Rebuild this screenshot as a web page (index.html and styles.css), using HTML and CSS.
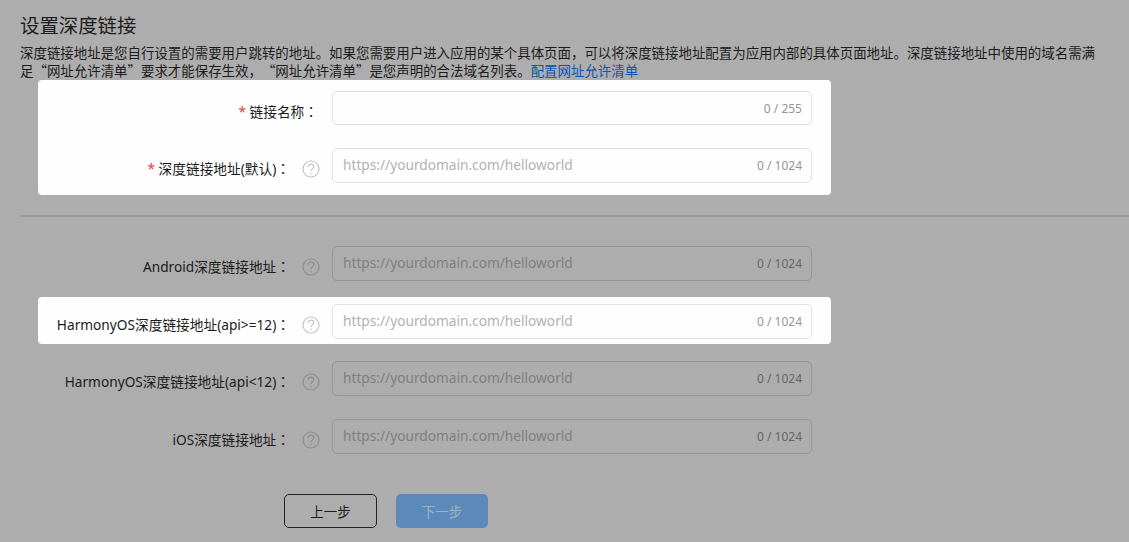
FILE: index.html
```html
<!DOCTYPE html>
<html lang="zh-CN">
<head>
    <meta charset="UTF-8">
    <meta name="viewport" content="width=device-width, initial-scale=1.0">
    <title>设置深度链接</title>
    <link rel="stylesheet" href="styles.css">
</head>
<body>
    <div class="page">
        <h1>设置深度链接</h1>
        <p class="desc">深度链接地址是您自行设置的需要用户跳转的地址。如果您需要用户进入应用的某个具体页面，可以将深度链接地址配置为应用内部的具体页面地址。深度链接地址中使用的域名需满足“网址允许清单”要求才能保存生效，“网址允许清单”是您声明的合法域名列表。<a href="#">配置网址允许清单</a></p>

        <form>
            <div class="group lit first">
                <div class="row short">
                    <label class="label no-help"><span class="req">*</span> 链接名称<span class="colon" lang="zh-TW">：</span></label>
                    <div class="field">
                        <input type="text">
                        <span class="count">0 / 255</span>
                    </div>
                </div>
                <div class="row">
                    <label class="label"><span class="req">*</span> 深度链接地址(默认)<span class="colon" lang="zh-TW">：</span></label>
                    <svg class="help" viewBox="0 0 18 18"><circle cx="9" cy="9" r="8"/><path d="M6.2 7c0-1.7 1.2-2.9 2.8-2.9s2.8 1.1 2.8 2.6c0 2.1-2.8 2.2-2.8 4.4"/><path d="M9 12.8v1.5"/></svg>
                    <div class="field">
                        <input type="text" placeholder="https://yourdomain.com/helloworld">
                        <span class="count">0 / 1024</span>
                    </div>
                </div>
            </div>

            <hr class="divider">

            <div class="group android">
                <div class="row">
                    <label class="label">Android深度链接地址<span class="colon" lang="zh-TW">：</span></label>
                    <svg class="help" viewBox="0 0 18 18"><circle cx="9" cy="9" r="8"/><path d="M6.2 7c0-1.7 1.2-2.9 2.8-2.9s2.8 1.1 2.8 2.6c0 2.1-2.8 2.2-2.8 4.4"/><path d="M9 12.8v1.5"/></svg>
                    <div class="field">
                        <input type="text" placeholder="https://yourdomain.com/helloworld">
                        <span class="count">0 / 1024</span>
                    </div>
                </div>
            </div>

            <div class="group lit second">
                <div class="row">
                    <label class="label">HarmonyOS深度链接地址(api&gt;=12)<span class="colon" lang="zh-TW">：</span></label>
                    <svg class="help" viewBox="0 0 18 18"><circle cx="9" cy="9" r="8"/><path d="M6.2 7c0-1.7 1.2-2.9 2.8-2.9s2.8 1.1 2.8 2.6c0 2.1-2.8 2.2-2.8 4.4"/><path d="M9 12.8v1.5"/></svg>
                    <div class="field">
                        <input type="text" placeholder="https://yourdomain.com/helloworld">
                        <span class="count">0 / 1024</span>
                    </div>
                </div>
            </div>

            <div class="group rest">
                <div class="row">
                    <label class="label">HarmonyOS深度链接地址(api&lt;12)<span class="colon" lang="zh-TW">：</span></label>
                    <svg class="help" viewBox="0 0 18 18"><circle cx="9" cy="9" r="8"/><path d="M6.2 7c0-1.7 1.2-2.9 2.8-2.9s2.8 1.1 2.8 2.6c0 2.1-2.8 2.2-2.8 4.4"/><path d="M9 12.8v1.5"/></svg>
                    <div class="field">
                        <input type="text" placeholder="https://yourdomain.com/helloworld">
                        <span class="count">0 / 1024</span>
                    </div>
                </div>
                <div class="row">
                    <label class="label">iOS深度链接地址<span class="colon" lang="zh-TW">：</span></label>
                    <svg class="help" viewBox="0 0 18 18"><circle cx="9" cy="9" r="8"/><path d="M6.2 7c0-1.7 1.2-2.9 2.8-2.9s2.8 1.1 2.8 2.6c0 2.1-2.8 2.2-2.8 4.4"/><path d="M9 12.8v1.5"/></svg>
                    <div class="field">
                        <input type="text" placeholder="https://yourdomain.com/helloworld">
                        <span class="count">0 / 1024</span>
                    </div>
                </div>
            </div>

            <div class="actions">
                <button type="button" class="btn prev">上一步</button>
                <button type="button" class="btn next">下一步</button>
            </div>
        </form>
    </div>
</body>
</html>
```

FILE: styles.css
```css
html, body {
    margin: 0;
    padding: 0;
    height: 100%;
    overflow: hidden;
}
body {
    font-family: "Noto Sans", "Noto Sans CJK SC", sans-serif;
    background-color: #adadad;
    color: #1c1c1c;
}
.page {
    padding: 12px 0 0 20px;
}
h1 {
    margin: 0;
    font-family: "Noto Sans CJK SC", sans-serif;
    font-size: 19.4px;
    font-weight: 400;
    line-height: 25px;
}
.desc {
    margin: 6px 33px 0 0;
    font-family: "Noto Sans CJK SC", sans-serif;
    font-size: 13.45px;
    line-height: 18px;
    text-spacing-trim: space-all;
}
.desc a {
    color: #0a55ad;
    text-decoration: none;
}
.group {
    width: 793px;
    margin-left: 18px;
}
.lit {
    background-color: #fefefe;
    border-radius: 4px;
}
.first {
    margin-top: 1px;
    padding: 11px 0 12px;
}
.second {
    margin-top: 16px;
    padding: 7px 0 5px;
}
.android {
    margin-top: 29px;
}
.rest {
    margin-top: 17px;
}
.row {
    display: flex;
    height: 35px;
    padding-right: 19px;
}
.row + .row {
    margin-top: 23px;
}
.row.short {
    height: 34px;
}
.label {
    flex: 1;
    margin-top: 3px;
    font-size: 13.7px;
    line-height: 35px;
    text-align: right;
    white-space: nowrap;
    text-spacing-trim: space-all;
}
.no-help {
    margin-right: 14px;
}
.colon {
    font-family: "Noto Sans CJK TC", sans-serif;
}
.req {
    color: #e8433a;
}
.help {
    flex: none;
    width: 18px;
    height: 18px;
    margin: 12px 12px 0 12px;
    fill: none;
    stroke: #8e8e8e;
    stroke-width: 1.2;
}
.lit .help {
    stroke: #c4c4c4;
}
.field {
    flex: none;
    display: flex;
    align-items: center;
    box-sizing: border-box;
    width: 480px;
    height: 100%;
    padding: 0 9px 2px 10px;
    border: 1px solid #979797;
    border-radius: 5px;
}
.lit .field {
    border-color: #e1e1ea;
}
.field input {
    flex: 1;
    min-width: 0;
    padding: 0;
    border: none;
    outline: none;
    background: transparent;
    font-family: inherit;
    font-size: 13.7px;
    color: #1c1c1c;
}
.field input::placeholder {
    color: #7f7f7f;
    opacity: 1;
}
.lit .field input::placeholder {
    color: #b2b2b2;
}
.count {
    margin-top: 2px;
    font-size: 12px;
    color: #666;
    white-space: nowrap;
}
.lit .count {
    color: #959595;
}
.divider {
    height: 2px;
    margin: 20px 0 0 0;
    border: none;
    background-color: #999;
}
.actions {
    display: flex;
    gap: 19px;
    margin: 40px 0 0 264px;
}
.btn {
    box-sizing: border-box;
    height: 34px;
    padding: 0;
    border-radius: 5px;
    font-family: inherit;
    font-size: 13.45px;
}
.prev {
    width: 93px;
    border: 1px solid #222;
    background: transparent;
    color: #1c1c1c;
}
.next {
    width: 92px;
    border: none;
    background-color: #5c89b9;
    color: #a3b3c4;
}
```
